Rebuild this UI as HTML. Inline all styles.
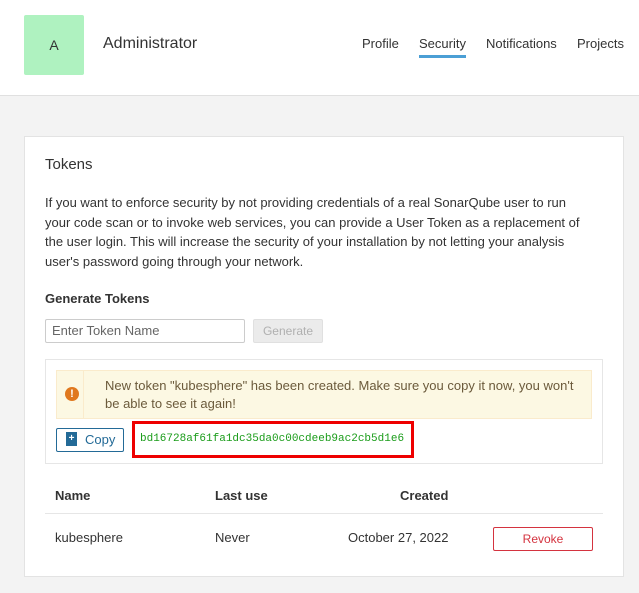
<!DOCTYPE html>
<html><head><style>
*{margin:0;padding:0;box-sizing:border-box}
body{width:639px;height:593px;background:#f3f3f3;font-family:"Liberation Sans",sans-serif;color:#333;position:relative;overflow:hidden;font-size:13px}
.a{position:absolute;white-space:nowrap}
</style></head><body>
<div class="a" style="left:0;top:0;width:639px;height:96px;background:#fff;border-bottom:1px solid #e0e0e0"></div>
<div class="a" style="left:24px;top:15px;width:60px;height:60px;background:#aff2c0;border-radius:2px;text-align:center;line-height:60px;font-size:14px">A</div>
<div class="a" style="left:103px;top:35px;font-size:16px;color:#333">Administrator</div>
<div class="a" style="left:362px;top:36px;font-size:13px">Profile</div>
<div class="a" style="left:419px;top:36px;font-size:13px">Security</div>
<div class="a" style="left:419px;top:55px;width:47px;height:3px;background:#4b9fd5"></div>
<div class="a" style="left:486px;top:36px;font-size:13px">Notifications</div>
<div class="a" style="left:577px;top:36px;font-size:13px">Projects</div>

<div class="a" style="left:24px;top:136px;width:600px;height:441px;background:#fff;border:1px solid #e3e3e3"></div>
<div class="a" style="left:45px;top:156px;font-size:15px">Tokens</div>
<div class="a" style="left:45px;top:193px;line-height:19.7px;white-space:normal;width:540px">If you want to enforce security by not providing credentials of a real SonarQube user to run your code scan or to invoke web services, you can provide a User Token as a replacement of the user login. This will increase the security of your installation by not letting your analysis user's password going through your network.</div>
<div class="a" style="left:45px;top:291px;font-weight:bold">Generate Tokens</div>
<div class="a" style="left:45px;top:319px;width:200px;height:24px;border:1px solid #ccc;border-radius:2px;padding-left:6px;line-height:22px;color:#666">Enter Token Name</div>
<div class="a" style="left:253px;top:319px;width:70px;height:24px;background:#ebebeb;border:1px solid #e0e0e0;border-radius:2px;text-align:center;line-height:22px;color:#b0b0b0;font-size:12px">Generate</div>

<div class="a" style="left:45px;top:359px;width:558px;height:105px;border:1px solid #e6e6e6"></div>
<div class="a" style="left:56px;top:370px;width:536px;height:49px;background:#fcf8e3;border:1px solid #faebcc"></div>
<div class="a" style="left:83px;top:371px;width:1px;height:47px;background:#faebcc"></div>
<div class="a" style="left:65px;top:387px;width:14px;height:14px;border-radius:50%;background:#e0781e;color:#fff;font-weight:bold;font-size:11px;text-align:center;line-height:14px">!</div>
<div class="a" style="left:105px;top:377px;line-height:18px;color:#6b5a3b;white-space:normal;width:480px">New token "kubesphere" has been created. Make sure you copy it now, you won't be able to see it again!</div>
<div class="a" style="left:56px;top:428px;width:68px;height:24px;border:1px solid #236a97;border-radius:2px;color:#236a97;font-size:13px;line-height:22px;padding-left:28px">Copy</div>
<div class="a" style="left:66px;top:432px;width:11px;height:14px;background:#236a97;color:#fff;font-size:10px;font-weight:bold;text-align:center;line-height:14px">+</div>
<div class="a" style="left:132px;top:421px;width:282px;height:37px;border:3px solid #e00"></div>
<div class="a" style="left:140px;top:433px;font-family:'Liberation Mono',monospace;font-size:11px;color:#1a9c1a">bd16728af61fa1dc35da0c00cdeeb9ac2cb5d1e6</div>

<div class="a" style="left:55px;top:488px;font-weight:bold">Name</div>
<div class="a" style="left:215px;top:488px;font-weight:bold">Last use</div>
<div class="a" style="left:400px;top:488px;font-weight:bold">Created</div>
<div class="a" style="left:45px;top:513px;width:558px;height:1px;background:#e6e6e6"></div>
<div class="a" style="left:55px;top:530px">kubesphere</div>
<div class="a" style="left:215px;top:530px">Never</div>
<div class="a" style="left:348px;top:530px">October 27, 2022</div>
<div class="a" style="left:493px;top:527px;width:100px;height:24px;border:1px solid #d4333f;border-radius:2px;color:#d4333f;text-align:center;line-height:22px;font-size:12px">Revoke</div>
</body></html>
